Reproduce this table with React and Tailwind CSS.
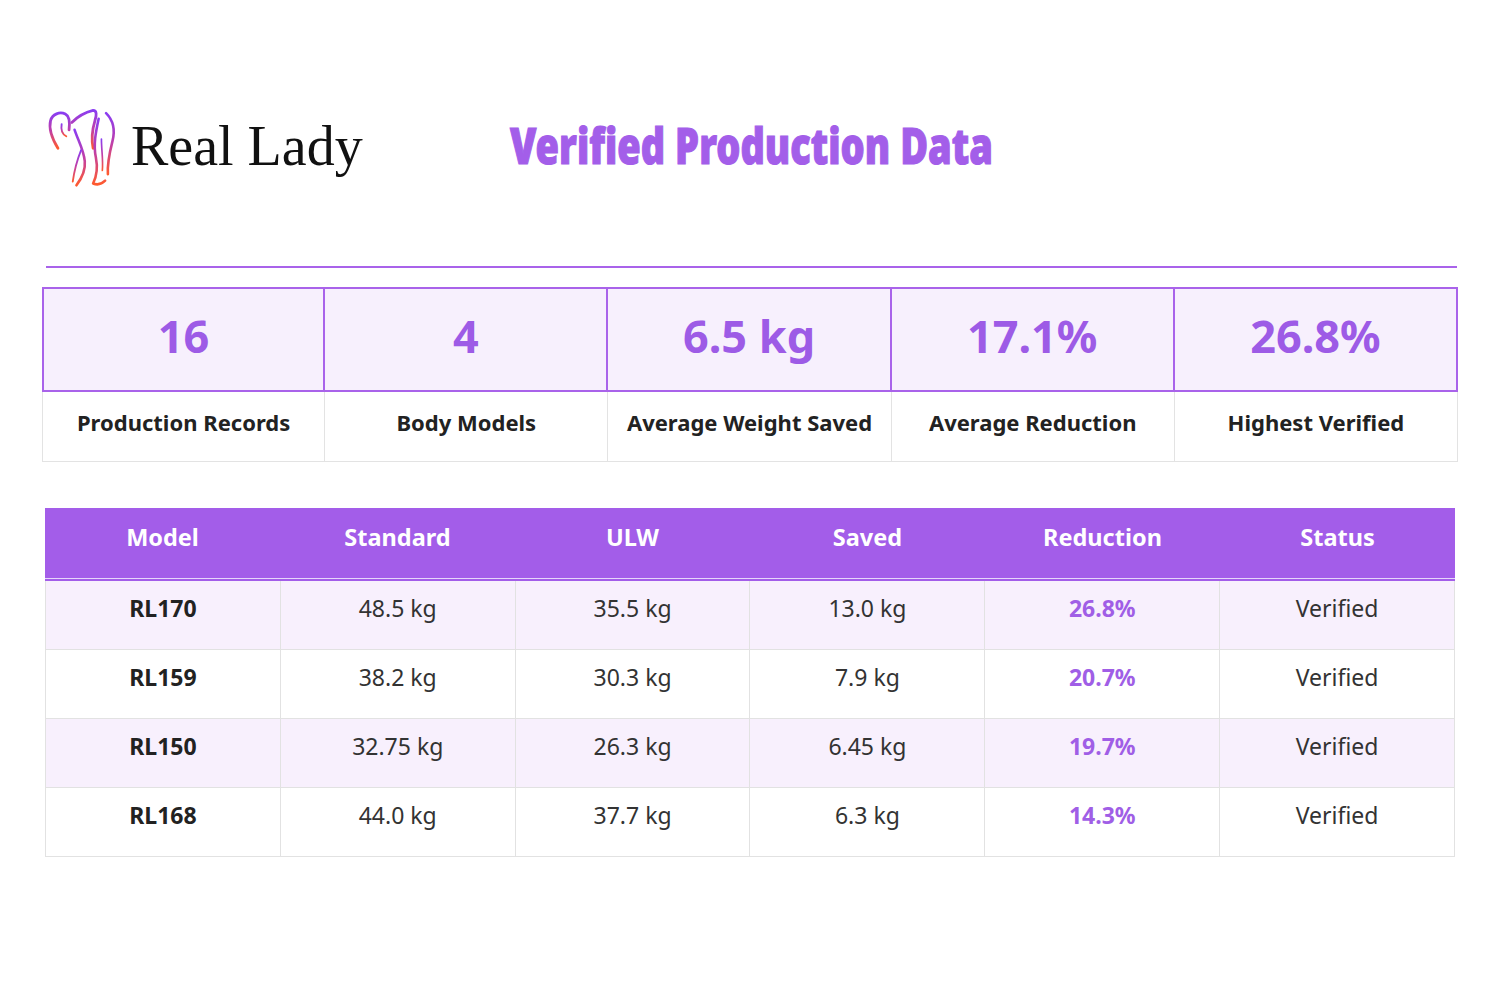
import React from "react";

const stats = [
  { value: "16", label: "Production Records" },
  { value: "4", label: "Body Models" },
  { value: "6.5 kg", label: "Average Weight Saved" },
  { value: "17.1%", label: "Average Reduction" },
  { value: "26.8%", label: "Highest Verified" },
];

const rows = [
  ["RL170", "48.5 kg", "35.5 kg", "13.0 kg", "26.8%", "Verified"],
  ["RL159", "38.2 kg", "30.3 kg", "7.9 kg", "20.7%", "Verified"],
  ["RL150", "32.75 kg", "26.3 kg", "6.45 kg", "19.7%", "Verified"],
  ["RL168", "44.0 kg", "37.7 kg", "6.3 kg", "14.3%", "Verified"],
];

const Logo = () => (
  <svg width="74" height="88" viewBox="0 0 80 95" fill="none">
    <defs>
      <linearGradient id="rl" x1="0" y1="0" x2="0" y2="1">
        <stop offset="0" stopColor="#8a3df2" />
        <stop offset="0.5" stopColor="#c03fa8" />
        <stop offset="1" stopColor="#ff5a2e" />
      </linearGradient>
    </defs>
    <g stroke="url(#rl)" strokeLinecap="round" strokeLinejoin="round" fill="none">
      <path d="M14 50 C8 40 4 28 6 20 C8 13 16 10 22 13 C26 15 27 22 26 30" strokeWidth="3" />
      <path d="M18 24 C17 30 19 35 23 37" strokeWidth="2" />
      <path d="M29 22 C36 15 44 11 52 9 C56 9 56 14 54 20 C51 30 50 40 52 50" strokeWidth="3" />
      <path d="M32 30 C36 42 42 52 43 64 C44 74 40 82 34 90" strokeWidth="2.8" />
      <path d="M39 52 C35 62 32 72 30 86" strokeWidth="2" />
      <path d="M58 18 C55 32 52 46 55 60 C57 70 56 80 52 88 C57 90 61 89 65 85" strokeWidth="2.8" />
      <path d="M66 12 C73 19 76 30 73 42 C70 54 67 66 68 78" strokeWidth="2.8" />
      <path d="M61 40 C61 52 63 62 62 74" strokeWidth="1.8" />
    </g>
  </svg>
);

const headers = ["Model", "Standard", "ULW", "Saved", "Reduction", "Status"];

export default function App() {
  return (
    <div className="min-h-screen w-full bg-white">
      <div className="ml-[42px] w-[1416px] pt-[100px] font-['Noto_Sans',sans-serif]">
        <div className="flex items-center h-[92px]">
          <div className="ml-[3px] flex items-center">
            <Logo />
            <span className="ml-[12px] text-[56px] leading-none text-[#111] font-['Liberation_Serif',serif]">
              Real Lady
            </span>
          </div>
          <h1 className="ml-[147px] -mt-[3px] inline-block origin-left scale-x-[0.76] whitespace-nowrap text-[50px] leading-none text-[#a35ee9] font-black [-webkit-text-stroke:1.2px_#a35ee9] font-['Noto_Sans',sans-serif]">
            Verified Production Data
          </h1>
        </div>

        <div className="mt-[74px] ml-[4px] mr-[1px] h-[2px] bg-[#a963ea]" />

        <div className="mt-[19px] grid grid-cols-5">
          {stats.map((s, i) => (
            <div key={s.label} className="flex flex-col">
              <div
                className={
                  "h-[105px] pb-[8px] flex items-center justify-center bg-[#f7f0fd] border-2 border-[#a963ea] " +
                  (i > 0 ? "border-l-0" : "")
                }
              >
                <span className="text-[45px] font-bold text-[#9d5be6] leading-none">{s.value}</span>
              </div>
              <div
                className={
                  "h-[70px] pb-[8px] flex items-center justify-center border border-t-0 border-[#e3e3e3] " +
                  (i > 0 ? "border-l-0" : "")
                }
              >
                <span className="text-[22px] font-bold text-[#222]">{s.label}</span>
              </div>
            </div>
          ))}
        </div>

        <div className="mt-[46px] ml-[3px] w-[1410px]">
          <div className="grid grid-cols-6 h-[70px] pb-[10px] bg-[#a35de9] items-center">
            {headers.map((h) => (
              <div key={h} className="text-center text-white font-bold text-[23.5px]">
                {h}
              </div>
            ))}
          </div>
          <div className="h-px bg-[#e6d6fa]" />
          <div className="h-[2px] bg-[#a35de9]" />
          {rows.map((r, ri) => (
            <div
              key={r[0]}
              className={
                "grid grid-cols-6 h-[69px] border-b border-[#e2e2e2] border-l " +
                (ri % 2 === 0 ? "bg-[#f8f0fd]" : "bg-white")
              }
            >
              {r.map((c, ci) => (
                <div
                  key={ci}
                  className={
                    "flex items-center justify-center pb-[14px] text-[23px] border-r border-[#e2e2e2] " +
                    (ci === 0
                      ? "font-bold text-[#222]"
                      : ci === 4
                      ? "font-bold text-[#a05ee6]"
                      : "text-[#333]")
                  }
                >
                  {c}
                </div>
              ))}
            </div>
          ))}
        </div>
      </div>
    </div>
  );
}
